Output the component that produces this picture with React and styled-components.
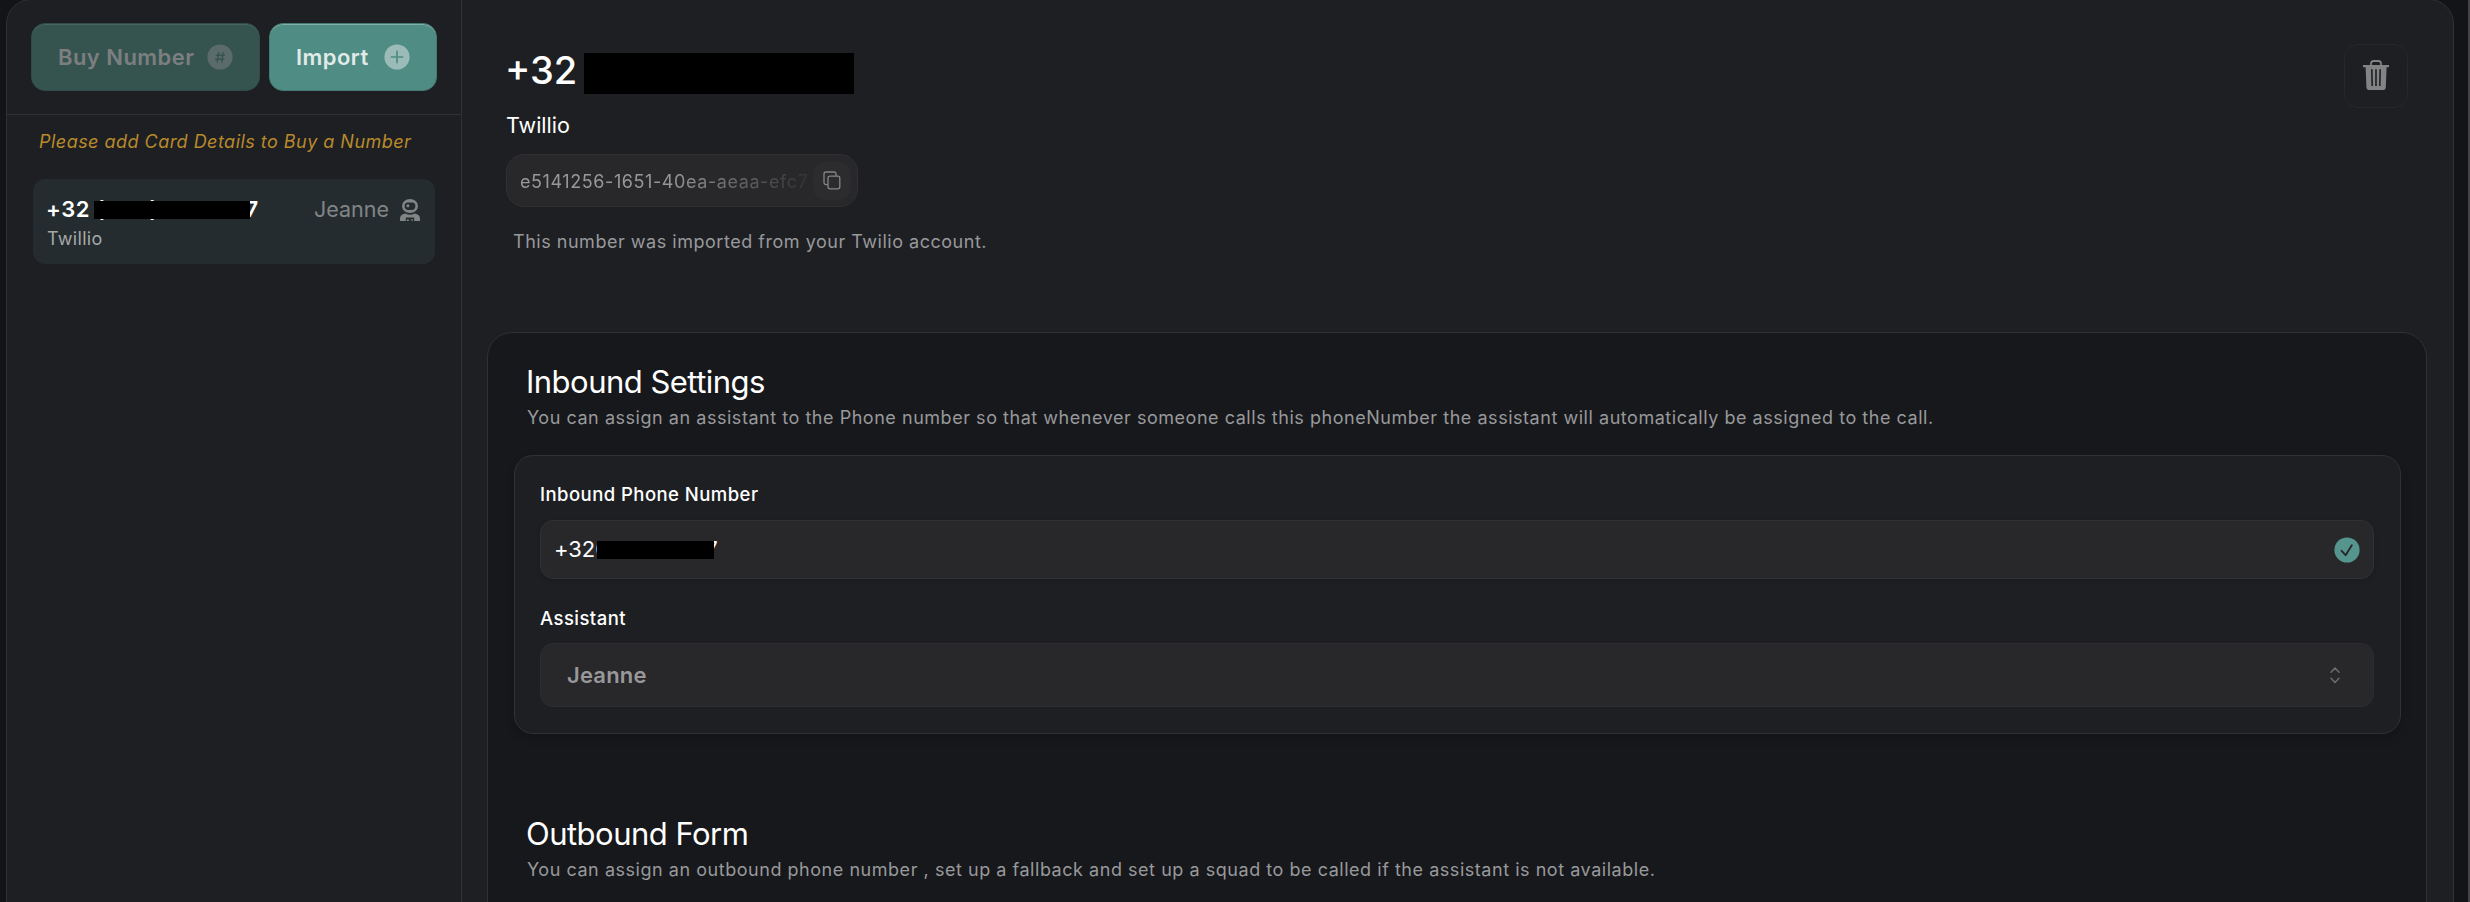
import styled, { createGlobalStyle } from 'styled-components'

function CircleIcon ({ children }) {
  return (
    <svg width='26' height='26' viewBox='0 0 26 26' fill='none'>
      <circle cx='13' cy='13' r='12.6' fill='currentColor' />
      {children}
    </svg>
  )
}

function RobotIcon () {
  return (
    <svg width='20' height='22' viewBox='0 0 20 22'>
      <path
        fill='currentColor'
        fillRule='evenodd'
        d='M10 0a8 7 0 0 1 8 7a8 7 0 0 1-16 0a8 7 0 0 1 8-7zM7.6 3.4Q4.6 3.6 4.6 7T7.6 10.9h4.8Q15.4 10.6 15.4 7T12.4 3.4z'
      />
      <rect x='6.6' y='5.6' width='2.6' height='2.6' rx='0.6' fill='currentColor' />
      <path
        fill='currentColor'
        fillRule='evenodd'
        d='M5.2 14.6Q10 17 14.8 14.6Q20 15.4 20 20v2H0v-2Q0 15.4 5.2 14.6zM5.8 18.4V22h1v-1.6h2V22h2.6v-2h1.2v2h1.6v-3.6z'
      />
    </svg>
  )
}

function CopyIcon () {
  return (
    <svg width='18' height='19' viewBox='0 0 18 19' fill='none' stroke='currentColor' strokeWidth='1.3'>
      <rect x='5' y='5.2' width='11.8' height='12.6' rx='2' />
      <path d='M5 13.6H3a2 2 0 0 1-2-2V3a2 2 0 0 1 2-2h8a2 2 0 0 1 2 2v2.2' />
    </svg>
  )
}

function TrashIcon () {
  return (
    <svg width='26' height='31' viewBox='0 0 26 31' fill='none'>
      <path d='M8 6V3.6Q8 1 10.6 1h4.8Q18 1 18 3.6V6' stroke='currentColor' strokeWidth='1.8' />
      <path
        fill='currentColor'
        fillRule='evenodd'
        d='M0 5h26v2.2h-2.4L22.8 27.2Q22.6 30 20 30H6.4Q3.6 30 3.4 27.2L2.6 7.2H0zM8 9.2L8.4 26H10L9.6 9.2zM12.2 9.2V26h1.6V9.2zM16.4 9.2L16 26h1.6L18 9.2z'
      />
    </svg>
  )
}

function Sidebar () {
  return (
    <Aside>
      <Toolbar>
        <ActionButton $width={229} disabled>
          Buy Number
          <CircleIcon>
            <path d='M11.8 8l-1.6 10.4M16.2 8l-1.6 10.4M8.8 11.2h9M8.2 15.2h9' stroke='#355450' strokeWidth='1.4' />
          </CircleIcon>
        </ActionButton>
        <ActionButton $width={168}>
          Import
          <CircleIcon>
            <path d='M13 7.4v11.2M7.4 13h11.2' stroke='#4f8c84' strokeWidth='1.7' strokeLinecap='round' />
          </CircleIcon>
        </ActionButton>
      </Toolbar>
      <Warning>Please add Card Details to Buy a Number</Warning>
      <NumberCard>
        <CardRow>
          <CardNumber>
            +32 (000) 000 007
            <Mask $left={48} $top={5} $width={156} />
          </CardNumber>
          <Assignee>
            Jeanne
            <RobotIcon />
          </Assignee>
        </CardRow>
        <CardProvider>Twillio</CardProvider>
      </NumberCard>
    </Aside>
  )
}

function NumberHeader () {
  return (
    <Header>
      <HeaderInfo>
        <TitleRow>
          <Title>+32</Title>
          <TitleMask />
        </TitleRow>
        <Provider>Twillio</Provider>
        <IdPill>
          <IdText>e5141256-1651-40ea-aeaa-efc7</IdText>
          <CopyButton aria-label='Copy'>
            <CopyIcon />
          </CopyButton>
        </IdPill>
        <Note>This number was imported from your Twilio account.</Note>
      </HeaderInfo>
      <DeleteButton aria-label='Delete'>
        <TrashIcon />
      </DeleteButton>
    </Header>
  )
}

function Settings () {
  return (
    <Section>
      <Heading>Inbound Settings</Heading>
      <Description>
        You can assign an assistant to the Phone number so that whenever someone calls this phoneNumber the assistant will automatically be assigned to the call.
      </Description>
      <FormCard>
        <Label>Inbound Phone Number</Label>
        <Field>
          <FieldValue>
            +32000000007
            <Mask $left={43} $top={5} $width={117} />
          </FieldValue>
          <Check>
            <CircleIcon>
              <path d='M7.6 13.8l4 4.4l6.2-10' stroke='#28282a' strokeWidth='1.9' strokeLinecap='round' strokeLinejoin='round' />
            </CircleIcon>
          </Check>
        </Field>
        <Label $spaced>Assistant</Label>
        <Select>
          Jeanne
          <svg width='10' height='17' viewBox='0 0 10 17' fill='none' stroke='#6d6d6f' strokeWidth='1.5' strokeLinecap='round' strokeLinejoin='round'>
            <path d='M1 5.2l4-4.2l4 4.2M1 11.2l4 4.2l4-4.2' />
          </svg>
        </Select>
      </FormCard>
      <Heading>Outbound Form</Heading>
      <Description>
        You can assign an outbound phone number , set up a fallback and set up a squad to be called if the assistant is not available.
      </Description>
    </Section>
  )
}

export default function App () {
  return (
    <Page>
      <GlobalStyle />
      <Panel>
        <Sidebar />
        <Main>
          <NumberHeader />
          <Settings />
        </Main>
      </Panel>
    </Page>
  )
}

const GlobalStyle = createGlobalStyle`
  * {
    box-sizing: border-box;
  }

  body {
    margin: 0;
    background: #131418;
    color: #fff;
    font-family: Inter, 'Liberation Sans', sans-serif;
  }

  button {
    font: inherit;
    color: inherit;
    padding: 0;
  }

  svg {
    display: block;
    flex: none;
  }
`

const Page = styled.div`
  height: 902px;
  overflow: hidden;
  padding: 0 14px 0 6px;
  border-right: 2px solid #454343;
  background: #131418;
`

const Panel = styled.div`
  display: flex;
  height: 960px;
  margin-top: -1px;
  background: #1e1f23;
  border: 1px solid #303134;
  border-radius: 25px;
`

const Aside = styled.aside`
  width: 455px;
  flex: none;
  border-right: 1px solid #303134;
`

const Toolbar = styled.div`
  display: flex;
  gap: 9px;
  height: 115px;
  padding: 23px 24px;
  border-bottom: 1px solid #303134;
`

const ActionButton = styled.button`
  display: flex;
  align-items: center;
  justify-content: space-between;
  width: ${({ $width }) => $width}px;
  height: 68px;
  padding: 0 26px;
  border: 1px solid #447a73;
  border-radius: 14px;
  background: #4f8c84;
  box-shadow: inset 0 1px 0 #82aea9;
  color: #e0ebe9;
  font-size: 22px;
  font-weight: 600;
  letter-spacing: 0.45px;

  svg {
    color: #9abbb7;
  }

  &:disabled {
    border-color: #304b49;
    background: #355450;
    box-shadow: inset 0 1px 0 #496662;
    color: #7c7f80;
  }

  &:disabled svg {
    color: #5b6b6a;
  }
`

const Warning = styled.p`
  margin: 14px 0 0 32px;
  font-size: 18px;
  line-height: 25px;
  font-style: italic;
  letter-spacing: 0.47px;
  color: #b98a2b;
`

const NumberCard = styled.div`
  width: 402px;
  height: 85px;
  margin: 25px 0 0 26px;
  padding: 17px 15px 0 14px;
  border-radius: 12px;
  background: #252c2f;
`

const CardRow = styled.div`
  display: flex;
  justify-content: space-between;
  line-height: 27px;
`

const CardNumber = styled.div`
  position: relative;
  font-size: 22px;
  font-weight: 600;
  letter-spacing: 0.52px;
  margin-left: -1px;
`

/* covers the hidden digits of a number */
const Mask = styled.span`
  position: absolute;
  left: ${({ $left }) => $left}px;
  top: ${({ $top }) => $top}px;
  width: ${({ $width }) => $width}px;
  height: 18px;
  background: #000;
`

const Assignee = styled.div`
  display: flex;
  align-items: center;
  gap: 11px;
  font-size: 21.5px;
  color: #818586;
`

const CardProvider = styled.div`
  font-size: 18px;
  line-height: 31px;
  letter-spacing: 0.3px;
  color: #a5a8a9;
`

const Main = styled.main`
  flex: 1;
  min-width: 0;
`

const Header = styled.header`
  display: flex;
  justify-content: space-between;
  align-items: flex-start;
  height: 332px;
  padding: 44px 45px 0 44px;
`

const HeaderInfo = styled.div`
  padding-top: 6px;
`

const TitleRow = styled.div`
  display: flex;
  align-items: center;
  height: 47px;
`

const Title = styled.h1`
  margin: 0 0 7px -1px;
  font-size: 38px;
  line-height: 41px;
  font-weight: 500;
`

const TitleMask = styled.span`
  width: 270px;
  height: 41px;
  margin-left: 7px;
  background: #000;
`

const Provider = styled.div`
  margin-top: 14px;
  font-size: 21.5px;
  line-height: 28px;
`

const IdPill = styled.div`
  display: flex;
  align-items: center;
  width: 352px;
  height: 53px;
  margin-top: 15px;
  padding: 0 6px 0 13px;
  border: 1px solid #303032;
  border-radius: 18px;
  background: #28282a;
`

const IdText = styled.span`
  flex: 1;
  min-width: 0;
  padding-top: 2px;
  overflow: hidden;
  white-space: nowrap;
  font-size: 18px;
  letter-spacing: 0.58px;
  color: #98989a;
  mask-image: linear-gradient(90deg, #000 50%, transparent 103%);
`

const CopyButton = styled.button`
  display: grid;
  place-items: center;
  width: 38px;
  height: 38px;
  border: 0;
  border-radius: 13px;
  background: #2c2c2e;
  color: #858587;
`

const Note = styled.p`
  margin: 21px 0 0 7px;
  font-size: 18px;
  line-height: 27px;
  letter-spacing: 0.52px;
  color: #98999b;
`

const DeleteButton = styled.button`
  display: grid;
  place-items: center;
  width: 64px;
  height: 64px;
  padding-bottom: 1px;
  border: 1px solid #27282b;
  border-radius: 14px;
  background: transparent;
  color: #828384;
`

const Section = styled.section`
  height: 640px;
  margin: 0 26px 0 25px;
  padding: 30px 25px 0 26px;
  border: 1px solid #303134;
  border-radius: 25px;
  background: #17181b;
`

const Heading = styled.h2`
  margin: 0 0 0 12px;
  font-size: 31px;
  line-height: 38px;
  font-weight: 400;
  letter-spacing: -0.52px;
`

const Description = styled.p`
  margin: 3px 0 0 13px;
  font-size: 18px;
  line-height: 27px;
  letter-spacing: 0.535px;
  color: #98999b;
`

const FormCard = styled.div`
  height: 279px;
  margin: 24px 0 81px;
  padding: 25px 26px 0 25px;
  border: 1px solid #303134;
  border-radius: 19px;
  background: #1e1f23;
  box-shadow: 0 5px 10px rgba(0, 0, 0, 0.16);
`

const Label = styled.label`
  display: block;
  margin-top: ${({ $spaced }) => ($spaced ? 26 : 0)}px;
  font-size: 18.5px;
  line-height: 26px;
  font-weight: 500;
  letter-spacing: 0.45px;
`

const Field = styled.div`
  display: flex;
  align-items: center;
  justify-content: space-between;
  height: 59px;
  margin-top: 13px;
  padding: 0 13px;
  border: 1px solid #303032;
  border-radius: 13px;
  background: #28282a;
  box-shadow: 0 2px 4px rgba(0, 0, 0, 0.12);
`

const FieldValue = styled.div`
  position: relative;
  font-size: 22px;
  line-height: 27px;
  letter-spacing: -0.05px;
`

const Check = styled.span`
  color: #55958d;
`

const Select = styled.div`
  display: flex;
  align-items: center;
  justify-content: space-between;
  height: 64px;
  margin-top: 12px;
  padding: 0 33px 0 26px;
  border: 1px solid #2d2d30;
  border-radius: 13px;
  background: #28282a;
  color: #98989a;
  font-size: 22px;
  font-weight: 600;
  letter-spacing: 0.2px;
`
